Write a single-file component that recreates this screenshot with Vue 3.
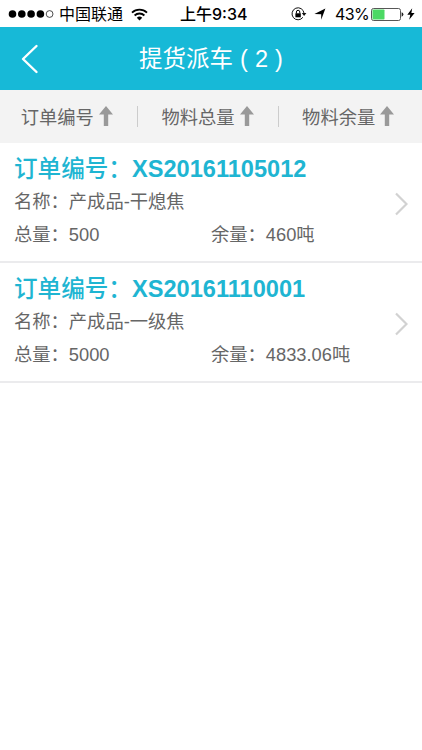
<template>
  <div class="page">
    <div class="status-bar">
      <svg class="signal" width="46" height="10" viewBox="0 0 46 10">
        <circle v-for="n in 4" :key="n" :cx="4.5 + (n - 1) * 9.3" cy="5" r="3.8" fill="#000" />
        <circle cx="41.6" cy="5" r="3.4" fill="none" stroke="#222" stroke-width="0.8" />
      </svg>
      <span class="carrier">中国联通</span>
      <svg class="wifi" width="17" height="13" viewBox="0 0 17 13">
        <path d="M1 4.7a10.8 10.8 0 0 1 15 0M3.6 7.5a7 7 0 0 1 9.8 0" fill="none" stroke="#000" stroke-width="1.8" />
        <path d="M5.8 9.7a4 4 0 0 1 5.4 0L8.5 12.5z" fill="#000" />
      </svg>
      <span class="clock">上午9:34</span>
      <svg class="lock" width="16" height="14" viewBox="0 0 16 14">
        <path d="M11.9 10.3A6 6 0 1 1 13 6.2" fill="none" stroke="#111" stroke-width="1" />
        <path d="M10.8 6.1h4.6L13.1 9z" fill="#111" />
        <rect x="4.4" y="6.3" width="5.4" height="4" fill="#000" />
        <path d="M5.4 6.5V5a1.7 1.7 0 0 1 3.4 0v1.5" fill="none" stroke="#000" stroke-width="1" />
      </svg>
      <svg class="location" width="12" height="12" viewBox="0 0 12 12">
        <path d="M11.4.6L7.2 11.8V6.2L.4 6z" fill="#000" />
      </svg>
      <span class="percent">43%</span>
      <svg class="battery" width="33" height="13" viewBox="0 0 33 13">
        <rect x="0.5" y="0.5" width="29" height="12" rx="2" fill="#fff" stroke="#444" stroke-width="0.9" />
        <rect x="1.5" y="1.5" width="12" height="10" rx="0.8" fill="#4cd964" />
        <path d="M30.6 4.3q1.8.6 1.8 2.2t-1.8 2.2z" fill="#222" />
      </svg>
      <svg class="bolt" width="8" height="12" viewBox="0 0 8 12">
        <path d="M5.2.3L.3 6.7h3L2.2 11.7 7.6 5H4.4z" fill="#000" />
      </svg>
    </div>

    <header class="nav-bar">
      <svg class="back" width="18" height="30" viewBox="0 0 18 30">
        <path d="M15.5 2L2 15l13.5 13" fill="none" stroke="#fff" stroke-width="2.4" stroke-linecap="round" stroke-linejoin="round" />
      </svg>
      <h1>提货派车 ( {{ orders.length }} )</h1>
    </header>

    <div class="sort-bar">
      <div v-for="label in sorts" :key="label" class="sort-item">
        <span>{{ label }}</span>
        <svg width="14" height="20" viewBox="0 0 14 20">
          <path d="M7 0L14 8.5H9.2V20H4.8V8.5H0z" fill="#999" />
        </svg>
      </div>
    </div>

    <ul class="order-list">
      <li v-for="order in orders" :key="order.no" class="order">
        <div class="order-body">
          <div class="order-no"><span class="order-label">订单编号：</span>{{ order.no }}</div>
          <div class="order-name">名称：{{ order.name }}</div>
          <div class="order-amount">
            <span>总量：{{ order.total }}</span>
            <span>余量：{{ order.rest }}吨</span>
          </div>
        </div>
        <svg class="chevron" width="14" height="24" viewBox="0 0 14 24">
          <path d="M2 1.5L12.5 12 2 22.5" fill="none" stroke="#d2d2d2" stroke-width="2.2" />
        </svg>
      </li>
    </ul>
  </div>
</template>

<script setup>
import { ref } from 'vue'

const sorts = ['订单编号', '物料总量', '物料余量']

const orders = ref([
  { no: 'XS20161105012', name: '产成品-干熄焦', total: '500', rest: '460' },
  { no: 'XS20161110001', name: '产成品-一级焦', total: '5000', rest: '4833.06' }
])
</script>

<style>
body {
  background: #fff;
}
</style>

<style scoped>
.page {
  width: 100%;
  min-height: 750px;
  background: #fff;
  color: #666;
  font-family: "Liberation Sans", "Noto Sans CJK SC", sans-serif;
  font-size: 18.3px;
}

.status-bar {
  display: flex;
  align-items: center;
  height: 27px;
  box-sizing: border-box;
  padding: 1px 0 0 8px;
  color: #000;
  font-size: 16px;
  line-height: 26px;
  white-space: nowrap;
}

.status-bar svg {
  flex: none;
}

.carrier {
  width: 64px;
  margin-left: 5px;
  padding-top: 1px;
}

.wifi {
  margin-left: 8px;
}

.clock {
  width: 70px;
  margin-left: 32px;
  font-family: Inter, "Noto Sans CJK SC", sans-serif;
  font-weight: 500;
}

.lock {
  margin-left: 41px;
}

.location {
  margin-left: 7px;
}

.percent {
  width: 33px;
  margin-left: 9px;
  font-family: Inter, sans-serif;
  letter-spacing: -0.6px;
}

.battery {
  margin-left: 3px;
}

.bolt {
  margin-left: 3px;
}

.nav-bar {
  display: flex;
  align-items: center;
  height: 63px;
  padding-left: 21px;
  background: #17b9d7;
}

.nav-bar h1 {
  flex: 1;
  margin: 0 39px 0 0;
  color: #fff;
  font-size: 23.5px;
  font-weight: normal;
  line-height: 34px;
  text-align: center;
  word-spacing: 0.5px;
}

.sort-bar {
  display: flex;
  height: 53px;
  background: #f3f3f3;
}

.sort-item {
  display: flex;
  flex: 1;
  align-items: center;
  justify-content: center;
  gap: 5px;
  position: relative;
  padding: 0 7px 1px 0;
}

.sort-item + .sort-item::before {
  content: "";
  position: absolute;
  left: -4px;
  top: 16px;
  width: 1px;
  height: 21px;
  background: #ccc;
}

.sort-item:last-child::before {
  left: -3px;
}

.order-list {
  margin: 0;
  padding: 0;
  list-style: none;
}

.order {
  display: flex;
  align-items: center;
  height: 120px;
  box-sizing: border-box;
  padding: 0 14px;
  border-bottom: 2px solid #ebebed;
}

.order-body {
  flex: 1;
  padding-bottom: 1px;
}

.order-no {
  padding-top: 1px;
  color: #1fb5d2;
  font-size: 23.6px;
  font-weight: bold;
  line-height: 33px;
}

.order-label {
  font-weight: 500;
}

.order-name,
.order-amount {
  line-height: 33px;
}

.order-name {
  line-height: 32px;
}

.order-amount {
  display: grid;
  grid-template-columns: 197px 1fr;
}

.chevron {
  flex: none;
  margin-top: 3px;
}
</style>
